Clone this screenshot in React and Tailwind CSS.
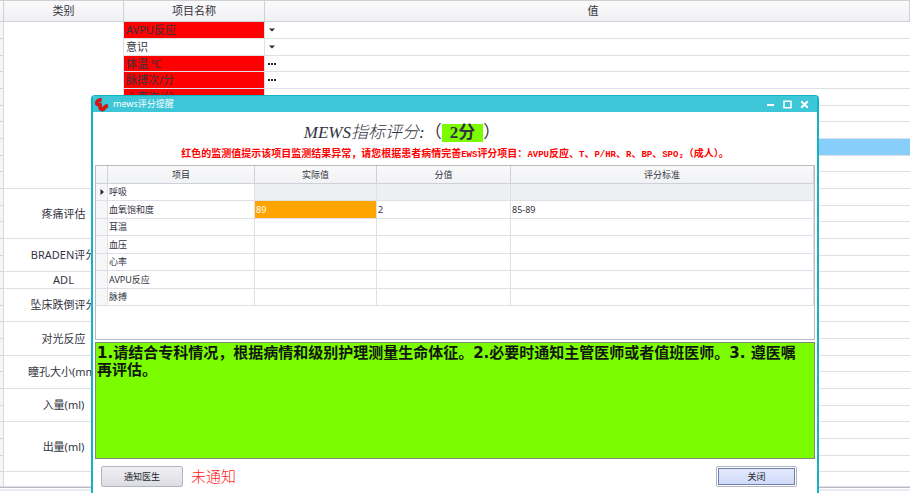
import React from 'react';

const CATEGORIES = [
  { label: '', rows: 10 },
  { label: '疼痛评估', rows: 3 },
  { label: 'BRADEN评分', rows: 2 },
  { label: 'ADL', rows: 1 },
  { label: '坠床跌倒评分', rows: 2 },
  { label: '对光反应', rows: 2 },
  { label: '瞳孔大小(mm)', rows: 2 },
  { label: '入量(ml)', rows: 2 },
  { label: '出量(ml)', rows: 3 },
  { label: '', rows: 1 },
];

const ITEMS = [
  { name: 'AVPU反应', alert: true, editor: 'select' },
  { name: '意识', editor: 'select' },
  { name: '体温 ℃', alert: true, editor: 'dialog' },
  { name: '脉搏次/分', alert: true, editor: 'dialog' },
  { name: '心率次/分', alert: true },
];

const SELECTED_ROW = 7;

const SCORES = [
  { name: '呼吸', current: true },
  { name: '血氧饱和度', actual: '89', score: '2', rule: '85-89' },
  { name: '耳温' },
  { name: '血压' },
  { name: '心率' },
  { name: 'AVPU反应' },
  { name: '脉搏' },
];

const ADVICE =
  '1.请结合专科情况，根据病情和级别护理测量生命体征。2.必要时通知主管医师或者值班医师。3. 遵医嘱再评估。';

const sheetRows = CATEGORIES.flatMap((category) =>
  Array.from({ length: category.rows }, (_, i) => (i === 0 ? category : null))
);

const sheetHead =
  'h-[21px] border-r border-b border-[#d0d1d6] bg-linear-to-b from-[#fafafb] to-[#f0f1f3] py-0 pr-0 font-normal';

const gridHead =
  'h-[18px] border-r border-b border-[#d0d1d8] bg-linear-to-b from-[#fafafb] to-[#f1f2f4] p-0 font-normal';

const gridCell = 'border-r border-b border-[#dfe0e5] py-0 px-px';

function rowHeight(i) {
  if (i === sheetRows.length - 1) {
    return 'h-[15px]';
  }
  return i % 3 === 2 ? 'h-4' : 'h-[17px]';
}

function ItemEditor({ name, type }) {
  if (type === 'select') {
    return (
      <button type="button" aria-label={name} className="flex h-3 w-3 items-center justify-center">
        <svg viewBox="0 0 6 4" className="h-1 w-1.5">
          <path d="M0 0.500h6L3 3.500z" fill="#26262e" />
        </svg>
      </button>
    );
  }
  if (type === 'dialog') {
    return (
      <button type="button" aria-label={name} className="flex h-3 w-3 items-center justify-center">
        <svg viewBox="0 0 8 2" className="h-[2px] w-2">
          <path d="M0 0h2v2H0zM3 0h2v2H3zM6 0h2v2H6z" fill="#26262e" />
        </svg>
      </button>
    );
  }
  return null;
}

function VitalsSheet() {
  return (
    <div className="border-t border-b border-t-[#cfd0d4] border-b-[#b9bac4] bg-white">
      <table className="w-full table-fixed border-separate border-spacing-0 text-[11px] leading-[14px] text-[#33333f]">
        <colgroup>
          <col className="w-1" />
          <col className="w-[120px]" />
          <col className="w-[141px]" />
          <col />
        </colgroup>
        <thead>
          <tr>
            <th className={`${sheetHead} pl-0`} />
            <th className={`${sheetHead} pl-0`}>类别</th>
            <th className={`${sheetHead} pl-0`}>项目名称</th>
            <th className={`${sheetHead} pl-3`}>值</th>
          </tr>
        </thead>
        <tbody>
          {sheetRows.map((category, i) => {
            const item = ITEMS[i];
            return (
              <tr key={i} className={rowHeight(i)}>
                <td className="border-r border-b border-[#d6d7dc] bg-[#f5f6f8] p-0" />
                {category && (
                  <td
                    rowSpan={category.rows}
                    className="overflow-hidden border-r border-b border-[#dfe0e5] p-0 text-center whitespace-nowrap"
                  >
                    {category.label}
                  </td>
                )}
                <td
                  className={`border-r border-b border-[#dfe0e5] py-0 pl-[2px] ${item?.alert ? 'bg-[#ff0000]' : ''}`}
                >
                  {item?.name}
                </td>
                <td
                  className={`border-b border-[#dfe0e5] py-0 pl-px ${i === SELECTED_ROW ? 'bg-[#87cefa]' : ''}`}
                >
                  {item?.editor && <ItemEditor name={item.name} type={item.editor} />}
                </td>
              </tr>
            );
          })}
        </tbody>
      </table>
    </div>
  );
}

function TitleBar() {
  return (
    <header className="flex h-4 items-center bg-[#3dc5d8] pr-2 pl-px text-white">
      <svg viewBox="0 0 16 15" className="h-[15px] w-4 shrink-0" fill="none">
        <path
          d="M7.500 2.600C4.500 2.800 2.500 4.500 2.700 6.200C3 8 5 7.600 6 7.500C6.500 9 5.500 10.500 6.500 11.800C7.500 13 9.500 12.800 10 11.500C10.400 10 11.500 9.300 13.800 8.600"
          stroke="#8f3a3a"
          strokeWidth="3.8"
        />
        <path
          d="M7.500 2.600C4.500 2.800 2.500 4.500 2.700 6.200C3 8 5 7.600 6 7.500C6.500 9 5.500 10.500 6.500 11.800C7.500 13 9.500 12.800 10 11.500C10.400 10 11.500 9.300 13.800 8.600"
          stroke="#e60f08"
          strokeWidth="2.6"
        />
      </svg>
      <h1 id="mews-title" className="ml-[3px] text-[9px] leading-4">
        mews评分提醒
      </h1>
      <div className="ml-auto flex items-center gap-2">
        <button type="button" aria-label="最小化">
          <svg viewBox="0 0 9 9" className="size-[9px]" stroke="#fff" strokeWidth="2">
            <path d="M1 5h7" />
          </svg>
        </button>
        <button type="button" aria-label="最大化">
          <svg viewBox="0 0 9 9" className="size-[9px]" fill="none" stroke="#fff" strokeWidth="1.6">
            <path d="M1 1.200h7v6.600H1z" />
          </svg>
        </button>
        <button type="button" aria-label="关闭窗口">
          <svg viewBox="0 0 9 9" className="size-[9px]" stroke="#fff" strokeWidth="2">
            <path d="M1.200 1.200l6.600 6.600M7.800 1.200L1.200 7.800" />
          </svg>
        </button>
      </div>
    </header>
  );
}

function Latin({ children }) {
  return <span className="font-['Liberation_Mono',monospace] text-[9px]">{children}</span>;
}

function ScoreSummary() {
  return (
    <div className="pt-3 whitespace-nowrap">
      <p className="flex h-[18px] items-center pl-[29%] font-['Liberation_Serif','Noto_Sans_CJK_SC',serif] text-[17px] leading-[18px] text-[#33333f]">
        <span className="font-light italic">MEWS指标评分:</span>
        <span>（</span>
        <strong className="bg-[#7cfc00] px-2">2分</strong>
        <span>）</span>
      </p>
      <p className="mt-1 text-center text-[10px] leading-[14px] font-bold text-[#ff0000]">
        红色的监测值提示该项目监测结果异常，请您根据患者病情完善<Latin>EWS</Latin>评分项目：
        <Latin>AVPU</Latin>反应、<Latin>T</Latin>、<Latin>P/HR</Latin>、<Latin>R</Latin>、
        <Latin>BP</Latin>、<Latin>SPO₂</Latin>（成人）。
      </p>
    </div>
  );
}

function ScoreGrid() {
  return (
    <div className="mt-[3px] h-[175px] border border-[#b9bac4]">
      <table className="w-full table-fixed border-separate border-spacing-0 text-[9px] leading-[14px] text-[#33333f]">
        <colgroup>
          <col className="w-3" />
          <col className="w-[147px]" />
          <col className="w-[122px]" />
          <col className="w-[134px]" />
          <col />
        </colgroup>
        <thead>
          <tr>
            <th className={gridHead} />
            <th className={gridHead}>项目</th>
            <th className={gridHead}>实际值</th>
            <th className={gridHead}>分值</th>
            <th className={gridHead}>评分标准</th>
          </tr>
        </thead>
        <tbody>
          {SCORES.map((row, i) => {
            const shade = row.current ? 'bg-[#eeeff1]' : '';
            return (
              <tr key={row.name} className={i % 2 ? 'h-[18px]' : 'h-[17px]'}>
                <td className="border-r border-b border-[#dfe0e5] bg-[#f5f6f8] p-0">
                  {row.current && (
                    <svg viewBox="0 0 4 6" className="mx-auto h-1.5 w-1">
                      <path d="M0.500 0L4 3L0.500 6z" fill="#26262e" />
                    </svg>
                  )}
                </td>
                <td className={gridCell}>{row.name}</td>
                <td className={`${gridCell} ${row.actual ? 'bg-[#ffa500] text-white' : shade}`}>
                  {row.actual}
                </td>
                <td className={`${gridCell} ${shade}`}>{row.score}</td>
                <td className={`${gridCell} ${shade}`}>{row.rule}</td>
              </tr>
            );
          })}
        </tbody>
      </table>
    </div>
  );
}

function MewsDialog() {
  return (
    <section
      role="dialog"
      aria-labelledby="mews-title"
      className="absolute top-[95px] right-[91px] bottom-0 left-[91px] overflow-hidden rounded-t-[4px] border-x-2 border-t border-[#12b4c4] bg-white"
    >
      <TitleBar />
      <div className="px-[2px]">
        <ScoreSummary />
        <ScoreGrid />
        <textarea
          readOnly
          aria-label="护理建议"
          value={ADVICE}
          className="mt-[2px] block h-[117px] w-full resize-none border border-[#7f8a78] bg-[#7cfc00] pt-[2px] pr-2 pb-0 pl-px font-['DejaVu_Sans','Noto_Sans_CJK_SC',sans-serif] text-[15px] leading-[17px] font-bold text-[#101810] outline-none"
        />
        <footer className="flex items-center px-1.5 pt-[7px]">
          <button
            type="button"
            className="h-[21px] w-[82px] rounded-[2px] border border-[#b4b5bf] bg-linear-to-b from-[#f0f0f3] to-[#dcdde3] text-[9px] text-[#26262e]"
          >
            通知医生
          </button>
          <span className="ml-2 text-[15px] leading-[21px] font-light text-[#ff1a1a]">未通知</span>
          <button
            type="button"
            className="mr-3 ml-auto h-[21px] w-[81px] rounded-[2px] border border-[#b4b5bf] bg-white p-px text-[9px] text-[#26262e]"
          >
            <span className="flex h-full items-center justify-center border border-[#6f7fae] bg-linear-to-b from-[#e4eafc] to-[#cfdafa]">
              关闭
            </span>
          </button>
        </footer>
      </div>
    </section>
  );
}

export default function App() {
  return (
    <main className="relative min-h-screen overflow-hidden bg-white font-['Noto_Sans','Noto_Sans_CJK_SC',sans-serif]">
      <VitalsSheet />
      <div className="mt-px h-[2px] bg-[#e9ecf3]" />
      <MewsDialog />
    </main>
  );
}
